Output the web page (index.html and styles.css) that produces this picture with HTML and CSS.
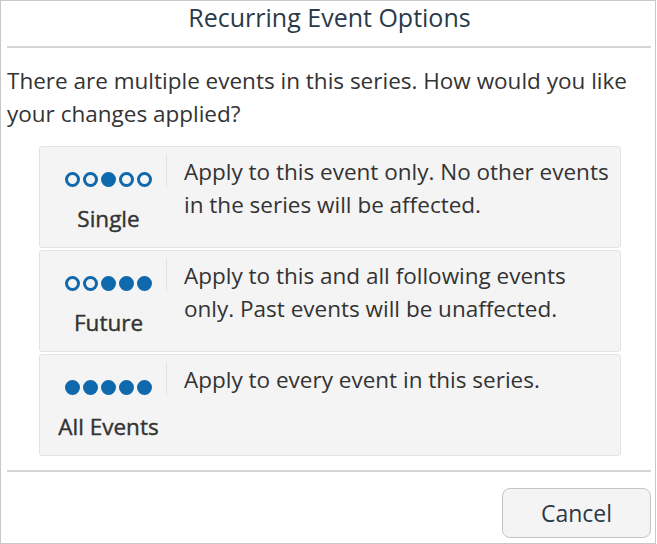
FILE: index.html
```html
<!DOCTYPE html>
<html>
<head>
<meta charset="utf-8">
<link rel="stylesheet" href="styles.css">
</head>
<body>
<div class="dialog">
  <div class="title">Recurring Event Options</div>
  <div class="rule"></div>
  <p class="intro">There are multiple events in this series. How would you like your changes applied?</p>
  <div class="options">
    <div class="option">
      <div class="side">
        <div class="dots">
          <span class="dot"></span><span class="dot"></span><span class="dot on"></span><span class="dot"></span><span class="dot"></span>
        </div>
        <div class="label">Single</div>
      </div>
      <div class="desc">Apply to this event only. No other events in the series will be affected.</div>
    </div>
    <div class="option">
      <div class="side">
        <div class="dots">
          <span class="dot"></span><span class="dot"></span><span class="dot on"></span><span class="dot on"></span><span class="dot on"></span>
        </div>
        <div class="label">Future</div>
      </div>
      <div class="desc">Apply to this and all following events only. Past events will be unaffected.</div>
    </div>
    <div class="option">
      <div class="side">
        <div class="dots">
          <span class="dot on"></span><span class="dot on"></span><span class="dot on"></span><span class="dot on"></span><span class="dot on"></span>
        </div>
        <div class="label">All Events</div>
      </div>
      <div class="desc">Apply to every event in this series.</div>
    </div>
  </div>
  <div class="rule bottom"></div>
  <div class="footer">
    <button class="cancel">Cancel</button>
  </div>
</div>
</body>
</html>
```
FILE: styles.css
```css
html, body {
  margin: 0;
  padding: 0;
  background: #fff;
}
.dialog {
  box-sizing: border-box;
  width: 656px;
  height: 544px;
  border: 1px solid #c8c8c8;
  font-family: "Open Sans", sans-serif;
  color: #333;
  padding: 0 3px 0 6px;
  display: flex;
  flex-direction: column;
}
.title {
  text-align: center;
  font-size: 25px;
  line-height: 33px;
  color: #2b3a48;
}
.rule {
  height: 2px;
  background: #d6d6d6;
  margin-top: 12px;
  margin-right: 1px;
}
.intro {
  margin: 16px 0 0 0;
  font-size: 22.5px;
  line-height: 33px;
  color: #333;
}
.options {
  margin: 16px 31px 0 32px;
  display: flex;
  flex-direction: column;
  gap: 2px;
}
.option {
  display: flex;
  height: 102px;
  box-sizing: border-box;
  background: #f4f4f4;
  border: 1px solid #e2e2e2;
  border-radius: 3px;
}
.side {
  width: 137px;
  flex: none;
  display: flex;
  flex-direction: column;
  align-items: center;
  padding-top: 25px;
  position: relative;
}
.side::after {
  content: "";
  position: absolute;
  right: 10px;
  top: 8px;
  height: 32px;
  width: 1px;
  background: #e2e2e2;
}
.dots {
  display: flex;
  gap: 3px;
  height: 16px;
}
.dot {
  box-sizing: border-box;
  width: 15px;
  height: 15px;
  border-radius: 50%;
  border: 3px solid #1068ad;
}
.dot.on {
  background: #1068ad;
}
.label {
  margin-top: 16px;
  font-size: 22.5px;
  line-height: 30px;
  color: #333;
  -webkit-text-stroke: 0.4px #333;
}
.desc {
  flex: 1;
  padding: 8px 8px 0 7px;
  font-size: 22.5px;
  line-height: 33px;
  color: #333;
}
.bottom {
  margin-top: 14px;
}
.footer {
  display: flex;
  justify-content: flex-end;
  padding-top: 16px;
}
.cancel {
  width: 149px;
  height: 50px;
  box-sizing: border-box;
  border: 1px solid #c4c4c4;
  border-radius: 8px;
  background: #f4f4f4;
  font-family: "Open Sans", sans-serif;
  font-size: 23px;
  color: #2b3a48;
  margin-right: 1px;
}
```
